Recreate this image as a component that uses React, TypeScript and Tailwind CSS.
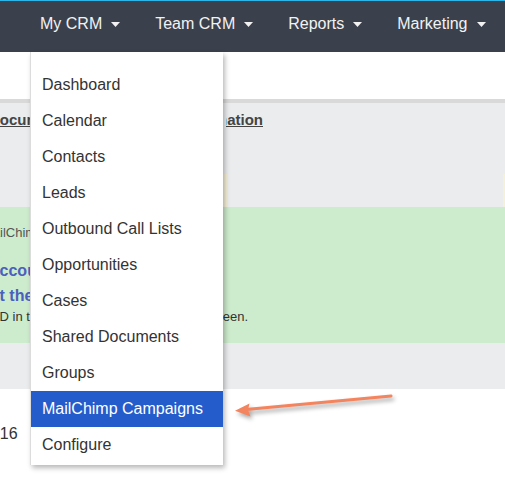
import React from 'react';

const navItems = ['My CRM', 'Team CRM', 'Reports', 'Marketing'];

const menuItems = [
  'Dashboard',
  'Calendar',
  'Contacts',
  'Leads',
  'Outbound Call Lists',
  'Opportunities',
  'Cases',
  'Shared Documents',
  'Groups',
  'MailChimp Campaigns',
  'Configure',
];

function Caret() {
  return (
    <svg width="9" height="5" viewBox="0 0 9 5" className="ml-[9px] mt-[2px]">
      <path d="M0 0H9L4.5 5Z" fill="#f2f2f2" />
    </svg>
  );
}

// left strip of the page that shows beside the open menu
function Clip({ children }: { children: React.ReactNode }) {
  return <div className="w-[30px] shrink-0 overflow-hidden whitespace-nowrap">{children}</div>;
}

export default function App() {
  return (
    <div className="relative w-[505px] h-[480px] overflow-hidden bg-white font-['Liberation_Sans',Arial,sans-serif]">
      {/* Top bar */}
      <div className="h-px bg-[#2ab6e9]" />
      <nav className="h-[51px] bg-[#3b404d] flex items-center pl-10 gap-[35px] pb-[6px]">
        {navItems.map(n => (
          <div key={n} className="flex items-center text-[16px] text-[#f2f2f2] whitespace-nowrap">
            {n}
            <Caret />
          </div>
        ))}
      </nav>

      {/* Page content behind the menu */}
      <div className="h-[47px]" />
      <div className="h-1 bg-[#d9d9d9]" />
      <div className="h-[104px] bg-[#ebecee] flex flex-col">
        <div className="pt-[7px] flex text-[15px] leading-[20px] font-bold text-[#444] underline">
          <Clip><span className="block -ml-[11px]">Documents</span></Clip>
          <div className="ml-[196px] w-[37px] flex justify-end overflow-hidden whitespace-nowrap">
            <span className="shrink-0">Information</span>
          </div>
        </div>
        <div className="flex-1" />
        <div className="h-[33px] ml-[223px] border-l-[4px] border-r-2 border-[#f5f0d8]" />
      </div>
      <div className="h-[136px] bg-[#cdebcd] pt-[17px]">
        <div className="flex text-[13px] leading-[18px] text-[#555]">
          <Clip><span className="block -ml-[18px]">MailChimp</span></Clip>
        </div>
        <div className="mt-[16px] font-bold text-[16px] leading-[25px] text-[#4a5fbf]">
          <div className="flex">
            <Clip><span className="block -ml-[12px]">Account</span></Clip>
          </div>
          <div className="flex">
            <Clip><span className="block -ml-[20px]">Set the</span></Clip>
          </div>
        </div>
        <div className="flex text-[13px] leading-[18px] text-[#333]">
          <Clip><span className="block -ml-[4px]">ID in the</span></Clip>
          <div className="ml-[188px] w-[30px] flex justify-end overflow-hidden whitespace-nowrap">
            <span className="shrink-0">screen.</span>
          </div>
        </div>
      </div>
      <div className="h-[46px] bg-[#ebecee]" />
      <div className="pt-[34px] flex text-[16px] leading-[22px] text-[#333]">
        <Clip><span className="block -ml-[18px]">2016</span></Clip>
      </div>

      {/* Dropdown menu */}
      <div className="absolute left-[30px] top-[52px] w-[193px] bg-white border-l border-[#dcdcdc] pt-[15px] pb-[2px] shadow-[2px_3px_5px_rgba(0,0,0,0.28)]">
        {menuItems.map(m => {
          const active = m === 'MailChimp Campaigns';
          return (
            <div
              key={m}
              className={
                active
                  ? 'h-9 flex items-center pl-[11px] text-[16px] text-white bg-[#245ccc] whitespace-nowrap'
                  : 'h-9 flex items-center pl-[11px] text-[16px] text-[#333] whitespace-nowrap'
              }
            >
              {m}
            </div>
          );
        })}
      </div>

      {/* Annotation arrow */}
      <svg
        className="absolute left-0 top-0 pointer-events-none"
        width="505"
        height="480"
        viewBox="0 0 505 480"
        style={{ filter: 'drop-shadow(2px 3px 2px rgba(0,0,0,0.35))' }}
      >
        <line x1="391" y1="396" x2="246" y2="409.5" stroke="#f4845e" strokeWidth="3" strokeLinecap="round" />
        <path d="M235 410.8L249.5 403.6L248 410L250.5 416.4Z" fill="#f4845e" />
      </svg>
    </div>
  );
}
